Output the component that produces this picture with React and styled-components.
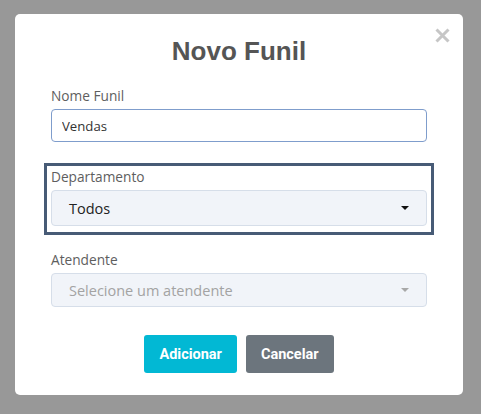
import React, { useState } from 'react';
import styled, { createGlobalStyle } from 'styled-components';

// colours
const backdrop = '#989898';
const titleGray = '#555555';
const labelGray = '#5e5e5e';
const frameBlue = '#475b76';
const fieldBg = '#f1f4f9';
const fieldBorder = '#d6dee9';
const cyan = '#02b8d4';
const slate = '#6c757d';

const GlobalStyle = createGlobalStyle`
  html, body {
    margin: 0;
    background: ${backdrop};
  }
`;

const Page = styled.div`
  min-height: 414px;
  padding: 14px 0 0 15px;
  box-sizing: border-box;
  display: flex;
  align-items: flex-start;
`;

const Modal = styled.div`
  position: relative;
  width: 448px;
  box-sizing: border-box;
  padding: 22px 36px 22px;
  background: #fff;
  border-radius: 5px;
  display: flex;
  flex-direction: column;
`;

const Close = styled.span`
  position: absolute;
  top: 14px;
  right: 13px;
  width: 15px;
  height: 15px;
  cursor: pointer;

  svg {
    display: block;
  }
`;

const Title = styled.h2`
  margin: 0 0 21px;
  text-align: center;
  font-family: "Liberation Sans", Arial, sans-serif;
  font-weight: 700;
  font-size: 26px;
  line-height: 30px;
  color: ${titleGray};
`;

const Group = styled.div`
  display: flex;
  flex-direction: column;
  gap: 4px;
  margin-bottom: ${p => p.$gap || 0}px;
`;

const Frame = styled.div`
  margin: 0 -7px 16px;
  padding: 2px 4px 6px;
  border: 3px solid ${frameBlue};
`;

const Label = styled.label`
  font-family: "Open Sans", sans-serif;
  font-size: 13.7px;
  line-height: 18px;
  color: ${labelGray};
`;

const Input = styled.input`
  height: 33px;
  box-sizing: border-box;
  padding: 0 10px;
  border: 1px solid #7f9dcc;
  border-radius: 4px;
  font-family: "Open Sans", sans-serif;
  font-size: 13.2px;
  color: #333;
  outline: none;
`;

const Select = styled.div`
  height: ${p => p.$h}px;
  box-sizing: border-box;
  padding: 0 17px 0 17px;
  border: 1px solid ${fieldBorder};
  border-radius: 4px;
  background: ${fieldBg};
  display: flex;
  align-items: center;
  justify-content: space-between;
  font-family: "Open Sans", sans-serif;
  font-size: 14.5px;
  color: ${p => (p.$disabled ? '#a3a3a3' : '#222')};
`;

const Caret = styled.span`
  width: 0;
  height: 0;
  border-left: 4px solid transparent;
  border-right: 4px solid transparent;
  border-top: 4px solid ${p => (p.$disabled ? '#a8a8a8' : '#111')};
`;

const Actions = styled.div`
  margin-top: 28px;
  display: flex;
  justify-content: center;
  gap: 9px;
`;

const Button = styled.button`
  height: 38px;
  padding: 0 ${p => p.$pad}px;
  border: none;
  border-radius: 3px;
  background: ${p => p.$bg};
  color: #fff;
  font-family: Roboto, sans-serif;
  font-weight: 700;
  font-size: 14.5px;
  cursor: pointer;
`;

function CloseIcon() {
  return (
    <svg width="15" height="15" viewBox="0 0 15 15">
      <path d="M1.5 1.5 L13.5 13.5 M13.5 1.5 L1.5 13.5" stroke="#c6c6c6" strokeWidth="3" />
    </svg>
  );
}

export default function App() {
  const [name, setName] = useState('Vendas');

  return (
    <>
      <GlobalStyle />
      <Page>
        <Modal>
          <Close aria-label="Fechar"><CloseIcon /></Close>
          <Title>Novo Funil</Title>

          <Group $gap={21}>
            <Label>Nome Funil</Label>
            <Input value={name} onChange={e => setName(e.target.value)} />
          </Group>

          <Frame>
            <Group>
              <Label>Departamento</Label>
              <Select $h={36}>
                Todos
                <Caret />
              </Select>
            </Group>
          </Frame>

          <Group>
            <Label>Atendente</Label>
            <Select $h={34} $disabled>
              Selecione um atendente
              <Caret $disabled />
            </Select>
          </Group>

          <Actions>
            <Button $bg={cyan} $pad={15}>Adicionar</Button>
            <Button $bg={slate} $pad={15}>Cancelar</Button>
          </Actions>
        </Modal>
      </Page>
    </>
  );
}
